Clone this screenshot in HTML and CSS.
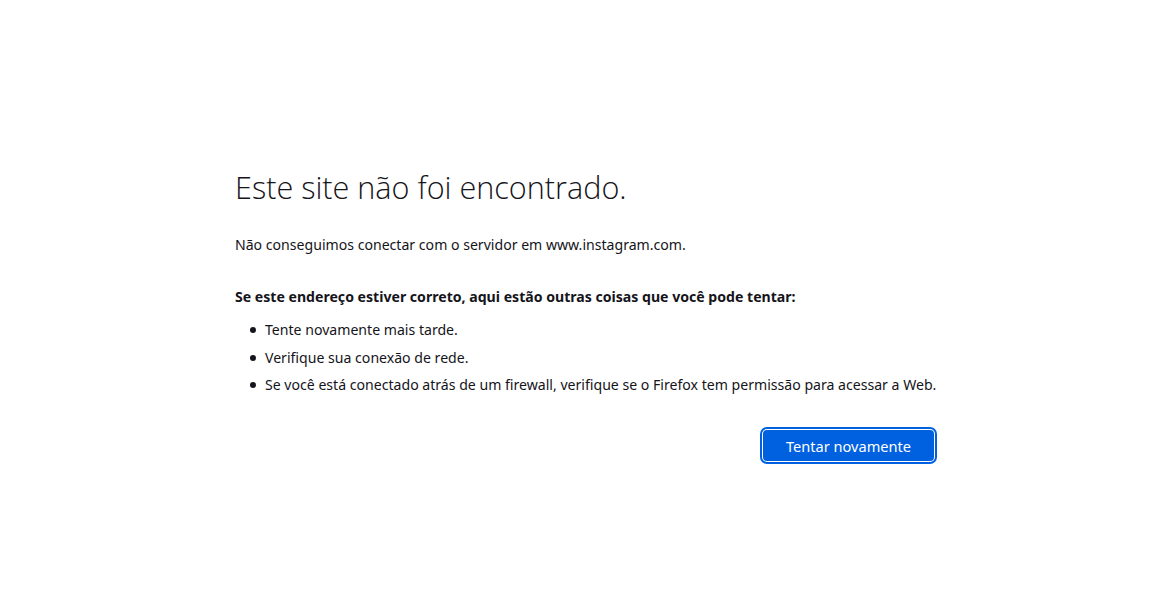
FILE: index.html
```html
<!DOCTYPE html>
<html lang="pt-BR">
<head>
<meta charset="utf-8">
<title>Problema ao carregar a página</title>
<link rel="stylesheet" href="styles.css">
</head>
<body>
<div class="container">
  <h1 class="title">Este site não foi encontrado.</h1>
  <p class="intro">Não conseguimos conectar com o servidor em www.instagram.com.</p>
  <p class="advice">Se este endereço estiver correto, aqui estão outras coisas que você pode tentar:</p>
  <ul class="tips">
    <li>Tente novamente mais tarde.</li>
    <li>Verifique sua conexão de rede.</li>
    <li>Se você está conectado atrás de um firewall, verifique se o Firefox tem permissão para acessar a Web.</li>
  </ul>
  <div class="actions">
    <button class="primary">Tentar novamente</button>
  </div>
</div>
</body>
</html>
```

FILE: styles.css
```css
html, body {
  margin: 0;
  padding: 0;
  background: #ffffff;
  color: #15141a;
  font-family: "Noto Sans", "Open Sans", sans-serif;
}
.container {
  width: 700px;
  margin: 0 auto;
  padding-top: 165px;
}
.title {
  margin: 0;
  font-family: "Open Sans", "Noto Sans", sans-serif;
  font-weight: 300;
  font-size: 30.6px;
  line-height: 44px;
}
.intro {
  margin: 26px 0 0;
  font-size: 14.1px;
  line-height: 20px;
}
.advice {
  margin: 32px 0 0;
  font-size: 14.1px;
  font-weight: 700;
  line-height: 20px;
}
.tips {
  list-style: none;
  margin: 13px 0 0;
  padding-left: 30px;
  font-size: 14.1px;
  line-height: 20px;
}
.tips li {
  position: relative;
  margin-bottom: 7.5px;
  white-space: nowrap;
}
.tips li::before {
  content: "";
  position: absolute;
  left: -15px;
  top: 7px;
  width: 6px;
  height: 6px;
  border-radius: 50%;
  background: #15141a;
}
.actions {
  display: flex;
  justify-content: flex-end;
  margin-top: 35px;
  padding-bottom: 10px;
}
.primary {
  width: 171px;
  height: 31px;
  margin-right: 1px;
  border: none;
  border-radius: 4px;
  background: #0061e0;
  color: #ffffff;
  font-family: "Noto Sans", sans-serif;
  font-size: 14.6px;
  box-shadow: 0 0 0 1px #ffffff, 0 0 0 3px #0061e0;
}
```
